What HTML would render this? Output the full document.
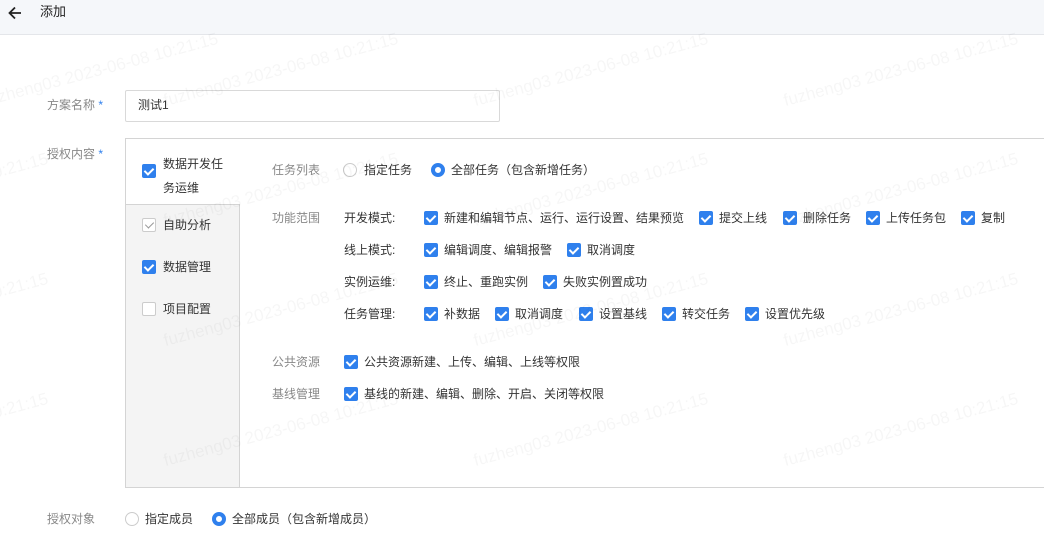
<!DOCTYPE html>
<html><head><meta charset="utf-8"><style>
*{margin:0;padding:0;box-sizing:border-box}
body{width:1044px;height:540px;overflow:hidden;background:#fff;font-family:"Liberation Sans","Noto Sans CJK SC",sans-serif;font-size:12px;color:#333;position:relative}
.a{position:absolute;white-space:nowrap;line-height:14px}
.hd{position:absolute;left:0;top:0;width:1044px;height:35px;background:#f5f7fa;border-bottom:1px solid #e4e6ea}
.lab{color:#888}
.cb{position:absolute;width:14px;height:14px;border-radius:2px;background:#2f80ed}
.cb:after{content:"";position:absolute;left:4px;top:1.5px;width:4px;height:7px;border:solid #fff;border-width:0 2px 2px 0;transform:rotate(45deg)}
.cb.g{background:#fff;border:1px solid #ccc}
.cb.g:after{border-color:#999;left:3.5px;top:1px;border-width:0 1.5px 1.5px 0}
.cb.e{background:#fff;border:1px solid #ccc}
.cb.e:after{display:none}
.rd{position:absolute;width:14px;height:14px;border-radius:50%;border:1px solid #ccc;background:#fff}
.rd.on{border:4px solid #2f80ed}
.wm{position:absolute;color:rgba(0,0,0,0.035);font-size:17px;transform:rotate(-15deg);white-space:nowrap}
</style></head><body>
<div class="hd"></div>
<svg class="a" style="left:7px;top:5px" width="16" height="16" viewBox="0 0 16 16"><path d="M14 8H2.5M8 2.5L2.5 8L8 13.5" stroke="#222" stroke-width="1.8" fill="none"/></svg>
<div class="a" style="left:40px;top:5px;font-size:13px;color:#222">添加</div>

<div class="a lab" style="left:47px;top:98px">方案名称 <span style="color:#2f80ed">*</span></div>
<div class="a" style="left:125px;top:90px;width:375px;height:32px;border:1px solid #d9d9d9;border-radius:2px"></div>
<div class="a" style="left:138px;top:98px">测试1</div>

<div class="a lab" style="left:47px;top:147px">授权内容 <span style="color:#2f80ed">*</span></div>
<div class="a" style="left:125px;top:138px;width:930px;height:350px;border:1px solid #d4d4d4"></div>
<div class="a" style="left:125px;top:204px;width:115px;height:284px;background:#f4f4f4;border:1px solid #d4d4d4"></div>
<div class="cb" style="left:142px;top:164px"></div>
<div class="a" style="left:163px;top:152px;line-height:24px">数据开发任<br>务运维</div>
<div class="cb g" style="left:142px;top:218px"></div><div class="a" style="left:163px;top:218px">自助分析</div>
<div class="cb" style="left:142px;top:260px"></div><div class="a" style="left:163px;top:260px">数据管理</div>
<div class="cb e" style="left:142px;top:302px"></div><div class="a" style="left:163px;top:302px">项目配置</div>

<div class="a lab" style="left:272px;top:163px">任务列表</div>
<div class="rd" style="left:343px;top:163px"></div><div class="a" style="left:364px;top:163px">指定任务</div>
<div class="rd on" style="left:431px;top:163px"></div><div class="a" style="left:451px;top:163px">全部任务（包含新增任务）</div>

<div class="a lab" style="left:272px;top:211px">功能范围</div>
<div class="a" style="left:344px;top:211px">开发模式:</div>
<div class="a" style="left:344px;top:243px">线上模式:</div>
<div class="a" style="left:344px;top:275px">实例运维:</div>
<div class="a" style="left:344px;top:307px">任务管理:</div>

<div class="cb" style="left:424px;top:211px"></div><div class="a" style="left:444px;top:211px">新建和编辑节点、运行、运行设置、结果预览</div>
<div class="cb" style="left:699px;top:211px"></div><div class="a" style="left:719px;top:211px">提交上线</div>
<div class="cb" style="left:783px;top:211px"></div><div class="a" style="left:803px;top:211px">删除任务</div>
<div class="cb" style="left:866px;top:211px"></div><div class="a" style="left:886px;top:211px">上传任务包</div>
<div class="cb" style="left:961px;top:211px"></div><div class="a" style="left:981px;top:211px">复制</div>

<div class="cb" style="left:424px;top:243px"></div><div class="a" style="left:444px;top:243px">编辑调度、编辑报警</div>
<div class="cb" style="left:567px;top:243px"></div><div class="a" style="left:587px;top:243px">取消调度</div>

<div class="cb" style="left:424px;top:275px"></div><div class="a" style="left:444px;top:275px">终止、重跑实例</div>
<div class="cb" style="left:543px;top:275px"></div><div class="a" style="left:563px;top:275px">失败实例置成功</div>

<div class="cb" style="left:424px;top:307px"></div><div class="a" style="left:444px;top:307px">补数据</div>
<div class="cb" style="left:495px;top:307px"></div><div class="a" style="left:515px;top:307px">取消调度</div>
<div class="cb" style="left:579px;top:307px"></div><div class="a" style="left:599px;top:307px">设置基线</div>
<div class="cb" style="left:662px;top:307px"></div><div class="a" style="left:682px;top:307px">转交任务</div>
<div class="cb" style="left:745px;top:307px"></div><div class="a" style="left:765px;top:307px">设置优先级</div>

<div class="a lab" style="left:272px;top:355px">公共资源</div>
<div class="cb" style="left:344px;top:355px"></div><div class="a" style="left:364px;top:355px">公共资源新建、上传、编辑、上线等权限</div>
<div class="a lab" style="left:272px;top:387px">基线管理</div>
<div class="cb" style="left:344px;top:387px"></div><div class="a" style="left:364px;top:387px">基线的新建、编辑、删除、开启、关闭等权限</div>

<div class="a lab" style="left:47px;top:512px">授权对象</div>
<div class="rd" style="left:125px;top:512px"></div><div class="a" style="left:145px;top:512px">指定成员</div>
<div class="rd on" style="left:212px;top:512px"></div><div class="a" style="left:232px;top:512px">全部成员（包含新增成员）</div>

<div class="wm" style="left:-20px;top:60px">fuzheng03 2023-06-08 10:21:15</div>
<div class="wm" style="left:160px;top:60px">fuzheng03 2023-06-08 10:21:15</div>
<div class="wm" style="left:470px;top:60px">fuzheng03 2023-06-08 10:21:15</div>
<div class="wm" style="left:780px;top:60px">fuzheng03 2023-06-08 10:21:15</div>
<div class="wm" style="left:-190px;top:180px">fuzheng03 2023-06-08 10:21:15</div>
<div class="wm" style="left:160px;top:180px">fuzheng03 2023-06-08 10:21:15</div>
<div class="wm" style="left:470px;top:180px">fuzheng03 2023-06-08 10:21:15</div>
<div class="wm" style="left:780px;top:180px">fuzheng03 2023-06-08 10:21:15</div>
<div class="wm" style="left:-190px;top:300px">fuzheng03 2023-06-08 10:21:15</div>
<div class="wm" style="left:160px;top:300px">fuzheng03 2023-06-08 10:21:15</div>
<div class="wm" style="left:470px;top:300px">fuzheng03 2023-06-08 10:21:15</div>
<div class="wm" style="left:780px;top:300px">fuzheng03 2023-06-08 10:21:15</div>
<div class="wm" style="left:-190px;top:420px">fuzheng03 2023-06-08 10:21:15</div>
<div class="wm" style="left:160px;top:420px">fuzheng03 2023-06-08 10:21:15</div>
<div class="wm" style="left:470px;top:420px">fuzheng03 2023-06-08 10:21:15</div>
<div class="wm" style="left:780px;top:420px">fuzheng03 2023-06-08 10:21:15</div>
</body></html>
